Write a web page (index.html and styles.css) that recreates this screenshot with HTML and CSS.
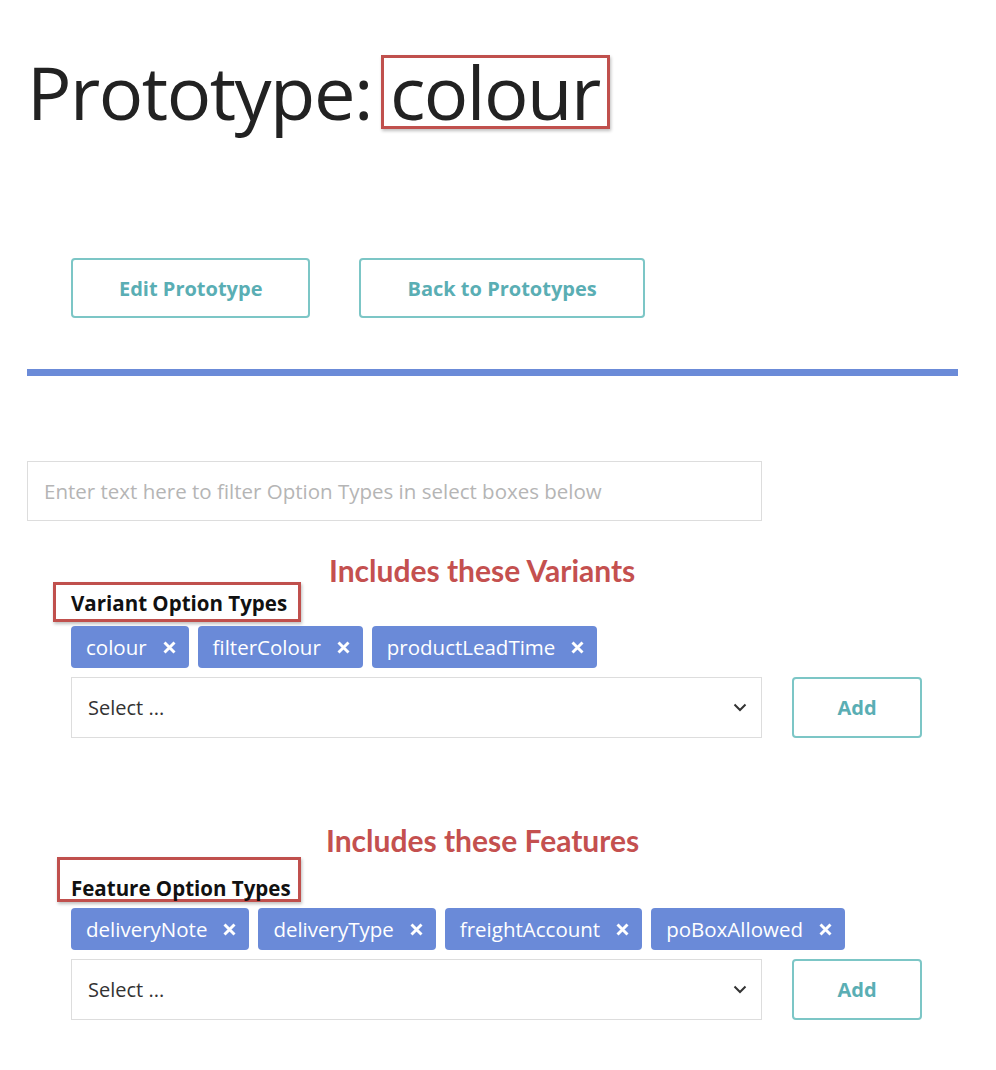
FILE: index.html
```html
<!DOCTYPE html>
<html lang="en">
<head>
  <meta charset="UTF-8">
  <meta name="viewport" content="width=device-width, initial-scale=1.0">
  <title>Prototype: colour</title>
  <link rel="stylesheet" href="styles.css">
</head>
<body>
  <div class="page">
    <h1 class="title">Prototype:<span class="mark mark-title">colour</span></h1>

    <div class="actions">
      <a class="btn btn-wide" href="#">Edit Prototype</a>
      <a class="btn btn-wide" href="#">Back to Prototypes</a>
    </div>

    <hr class="divider">

    <input type="text" class="filter" placeholder="Enter text here to filter Option Types in select boxes below">

    <section class="group">
      <p class="note">Includes these Variants</p>
      <div class="group-label"><span class="mark mark-label">Variant Option Types</span></div>
      <ul class="tags">
        <li class="tag">colour <svg class="tag-x" width="13" height="13" viewBox="0 0 13 13"><path d="M1.5 1.5 L11.5 11.5 M11.5 1.5 L1.5 11.5" stroke="#fff" stroke-width="2.9"/></svg></li>
        <li class="tag">filterColour <svg class="tag-x" width="13" height="13" viewBox="0 0 13 13"><path d="M1.5 1.5 L11.5 11.5 M11.5 1.5 L1.5 11.5" stroke="#fff" stroke-width="2.9"/></svg></li>
        <li class="tag">productLeadTime <svg class="tag-x" width="13" height="13" viewBox="0 0 13 13"><path d="M1.5 1.5 L11.5 11.5 M11.5 1.5 L1.5 11.5" stroke="#fff" stroke-width="2.9"/></svg></li>
      </ul>
      <div class="picker">
        <div class="select">
          <span>Select ...</span>
          <svg class="chevron" width="14" height="9" viewBox="0 0 14 9"><path d="M1.5 1.5 L7 7 L12.5 1.5" fill="none" stroke="#333" stroke-width="2"/></svg>
        </div>
        <button class="btn btn-add">Add</button>
      </div>
    </section>

    <section class="group group-features">
      <p class="note">Includes these Features</p>
      <div class="group-label"><span class="mark mark-label">Feature Option Types</span></div>
      <ul class="tags">
        <li class="tag">deliveryNote <svg class="tag-x" width="13" height="13" viewBox="0 0 13 13"><path d="M1.5 1.5 L11.5 11.5 M11.5 1.5 L1.5 11.5" stroke="#fff" stroke-width="2.9"/></svg></li>
        <li class="tag">deliveryType <svg class="tag-x" width="13" height="13" viewBox="0 0 13 13"><path d="M1.5 1.5 L11.5 11.5 M11.5 1.5 L1.5 11.5" stroke="#fff" stroke-width="2.9"/></svg></li>
        <li class="tag">freightAccount <svg class="tag-x" width="13" height="13" viewBox="0 0 13 13"><path d="M1.5 1.5 L11.5 11.5 M11.5 1.5 L1.5 11.5" stroke="#fff" stroke-width="2.9"/></svg></li>
        <li class="tag">poBoxAllowed <svg class="tag-x" width="13" height="13" viewBox="0 0 13 13"><path d="M1.5 1.5 L11.5 11.5 M11.5 1.5 L1.5 11.5" stroke="#fff" stroke-width="2.9"/></svg></li>
      </ul>
      <div class="picker">
        <div class="select">
          <span>Select ...</span>
          <svg class="chevron" width="14" height="9" viewBox="0 0 14 9"><path d="M1.5 1.5 L7 7 L12.5 1.5" fill="none" stroke="#333" stroke-width="2"/></svg>
        </div>
        <button class="btn btn-add">Add</button>
      </div>
    </section>
  </div>
</body>
</html>
```

FILE: styles.css
```css
body {
  margin: 0;
  background: #fff;
  font-family: 'Open Sans', 'Liberation Sans', sans-serif;
  color: #222;
}

.page {
  width: 931px;
  padding: 0 0 40px 27px;
}

.title {
  margin: 0;
  padding-top: 55px;
  font-size: 74px;
  font-weight: 400;
  line-height: 74px;
  color: #222;
  letter-spacing: -1.5px;
}

.mark {
  border: 3px solid #c0504d;
  box-shadow: 1px 2px 3px rgba(0, 0, 0, 0.25);
}

.mark-title {
  display: inline-block;
  margin-left: 9px;
  padding: 0 7px 0 6px;
  line-height: 68px;
}

.actions {
  display: flex;
  gap: 49px;
  margin: 129px 0 0 44px;
}

.btn {
  display: inline-flex;
  align-items: center;
  justify-content: center;
  box-sizing: border-box;
  height: 60px;
  border: 2px solid #7cc6c6;
  border-radius: 4px;
  background: #fff;
  color: #5aaeb4;
  font-family: 'Open Sans', sans-serif;
  font-size: 20px;
  font-weight: 700;
  text-decoration: none;
}

.btn-wide {
  padding: 0 46px;
}

.divider {
  margin: 51px 0 0 0;
  height: 7px;
  border: none;
  background: #6b8bd8;
}

.filter {
  display: block;
  box-sizing: border-box;
  width: 735px;
  height: 60px;
  margin-top: 85px;
  padding: 0 16px;
  border: 1px solid #ddd;
  font-family: 'Open Sans', sans-serif;
  font-size: 20.5px;
  color: #333;
}

.filter::placeholder {
  color: #b5b5b5;
}

.group {
  padding-left: 44px;
}

.note {
  margin: 31px 0 0 258px;
  font-family: 'Lato', sans-serif;
  font-size: 30px;
  font-weight: 700;
  line-height: 36px;
  color: #c4504f;
}

.group-label {
  margin-top: -6px;
  font-size: 20.5px;
  font-weight: 700;
  color: #111;
}

.mark-label {
  display: inline-block;
  margin-left: -18px;
  padding: 6px 11px 4px 15px;
  line-height: 24px;
}

.tags {
  display: flex;
  gap: 9px;
  margin: 4px 0 0 0;
  padding: 0;
  list-style: none;
}

.tag {
  display: flex;
  align-items: center;
  height: 42px;
  padding: 0 13px 0 15px;
  border-radius: 4px;
  background: #6a8ad8;
  color: #fff;
  font-size: 20.5px;
}

.tag-x {
  margin-left: 16px;
}

.picker {
  display: flex;
  gap: 30px;
  margin-top: 9px;
}

.select {
  display: flex;
  align-items: center;
  justify-content: space-between;
  box-sizing: border-box;
  width: 691px;
  height: 61px;
  padding: 0 14px 0 16px;
  border: 1px solid #ddd;
  font-size: 20px;
  color: #333;
}

.btn-add {
  width: 130px;
  height: 61px;
}

.group-features .note {
  margin: 84px 0 0 255px;
}

.group-features .group-label {
  margin-top: -1px;
}

.group-features .mark-label {
  margin-left: -14px;
  padding: 17px 7px 0 11px;
  line-height: 22px;
}

.group-features .tags {
  margin-top: 6px;
}
```
